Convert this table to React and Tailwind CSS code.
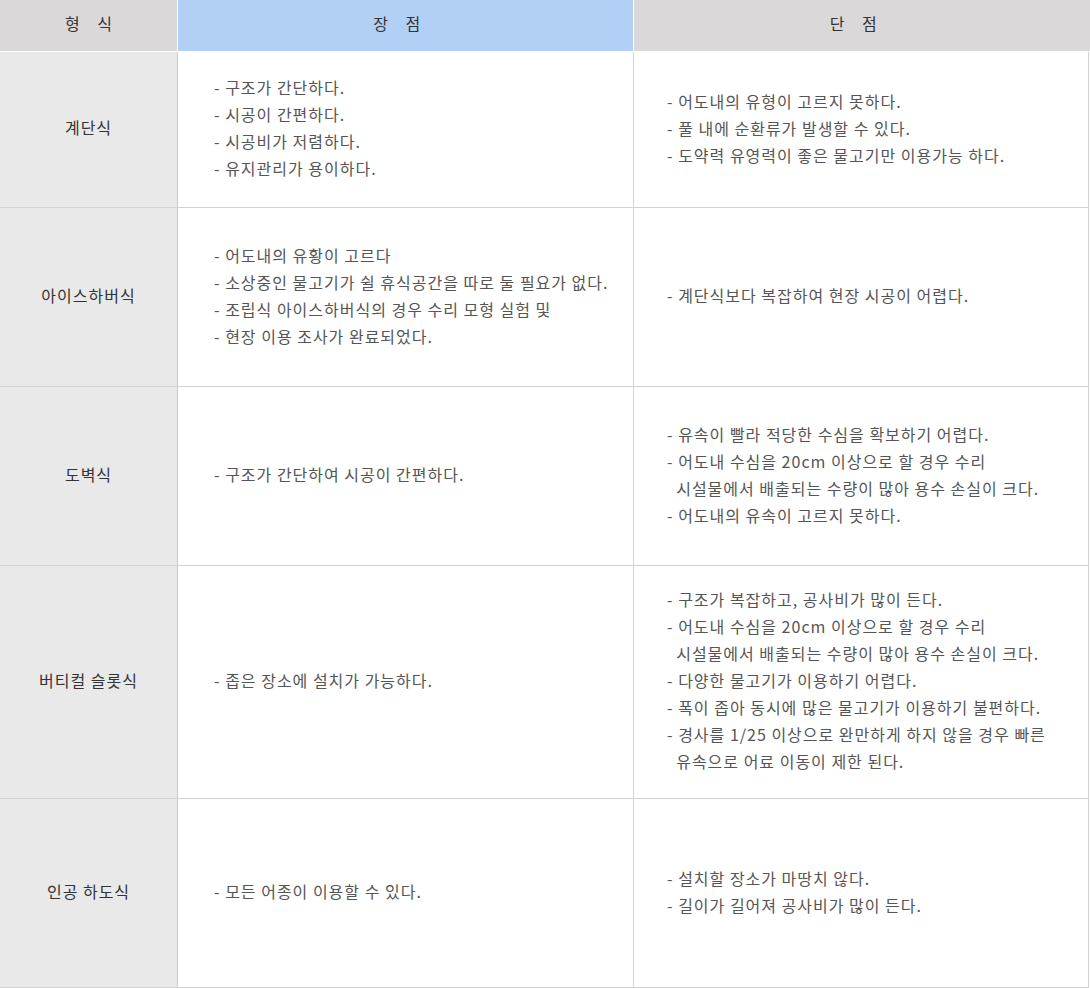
const rows = [
  {
    type: "계단식",
    h: "h-[155px]",
    pros: ["- 구조가 간단하다.", "- 시공이 간편하다.", "- 시공비가 저렴하다.", "- 유지관리가 용이하다."],
    cons: ["- 어도내의 유형이 고르지 못하다.", "- 풀 내에 순환류가 발생할 수 있다.", "- 도약력 유영력이 좋은 물고기만 이용가능 하다."],
  },
  {
    type: "아이스하버식",
    h: "h-[179px]",
    pros: [
      "- 어도내의 유황이 고르다",
      "- 소상중인 물고기가 쉴 휴식공간을 따로 둘 필요가 없다.",
      "- 조립식 아이스하버식의 경우 수리 모형 실험 및",
      "- 현장 이용 조사가 완료되었다.",
    ],
    cons: ["- 계단식보다 복잡하여 현장 시공이 어렵다."],
  },
  {
    type: "도벽식",
    h: "h-[179px]",
    pros: ["- 구조가 간단하여 시공이 간편하다."],
    cons: [
      "- 유속이 빨라 적당한 수심을 확보하기 어렵다.",
      "- 어도내 수심을 20cm 이상으로 할 경우 수리",
      "  시설물에서 배출되는 수량이 많아 용수 손실이 크다.",
      "- 어도내의 유속이 고르지 못하다.",
    ],
  },
  {
    type: "버티컬 슬롯식",
    h: "h-[233px]",
    pros: ["- 좁은 장소에 설치가 가능하다."],
    cons: [
      "- 구조가 복잡하고, 공사비가 많이 든다.",
      "- 어도내 수심을 20cm 이상으로 할 경우 수리",
      "  시설물에서 배출되는 수량이 많아 용수 손실이 크다.",
      "- 다양한 물고기가 이용하기 어렵다.",
      "- 폭이 좁아 동시에 많은 물고기가 이용하기 불편하다.",
      "- 경사를 1/25 이상으로 완만하게 하지 않을 경우 빠른",
      "  유속으로 어료 이동이 제한 된다.",
    ],
  },
  {
    type: "인공 하도식",
    h: "h-[189px]",
    pros: ["- 모든 어종이 이용할 수 있다."],
    cons: ["- 설치할 장소가 마땅치 않다.", "- 길이가 길어져 공사비가 많이 든다."],
  },
];

const Lines = ({ items }) => (
  <div className="flex flex-col">
    {items.map((t, i) => (
      <div key={i} className="leading-[27px] whitespace-pre">
        {t}
      </div>
    ))}
  </div>
);

export default function App() {
  return (
    <div
      className="w-[1090px] h-[988px] bg-white text-[16px] tracking-[1px] text-[#555]"
      style={{ fontFamily: '"Noto Sans CJK KR", "Noto Sans", sans-serif' }}
    >
      {/* header */}
      <div className="flex h-[52px] border-b border-white">
        <div className="w-[178px] bg-[#dad8d8] flex items-center justify-center pb-[5px] text-[#333] tracking-[1.1em] pl-[1.1em] border-r border-white">
          형식
        </div>
        <div className="w-[456px] bg-[#b2d0f6] flex items-center justify-center pb-[5px] text-[#333] tracking-[1.1em] border-r border-white">
          장점
        </div>
        <div className="flex-1 bg-[#dad8d8] flex items-center justify-center pb-[5px] text-[#333] tracking-[1.1em]">
          단점
        </div>
      </div>

      {/* body */}
      <div className="border-r border-b border-[#d2d2d2] w-[1089px]">
        {rows.map((r, i) => (
          <div key={r.type} className={`flex ${r.h} ${i > 0 ? "border-t border-[#d2d2d2]" : ""}`}>
            <div className="w-[178px] shrink-0 bg-[#e9e9e9] border-r border-[#cacaca] flex items-center justify-center pb-[5px] text-[#333]">
              {r.type}
            </div>
            <div className="w-[456px] shrink-0 border-r border-[#d2d2d2] flex items-center pb-[3px] pl-[36px]">
              <Lines items={r.pros} />
            </div>
            <div className="flex-1 flex items-center pb-[3px] pl-[33px]">
              <Lines items={r.cons} />
            </div>
          </div>
        ))}
      </div>
    </div>
  );
}
